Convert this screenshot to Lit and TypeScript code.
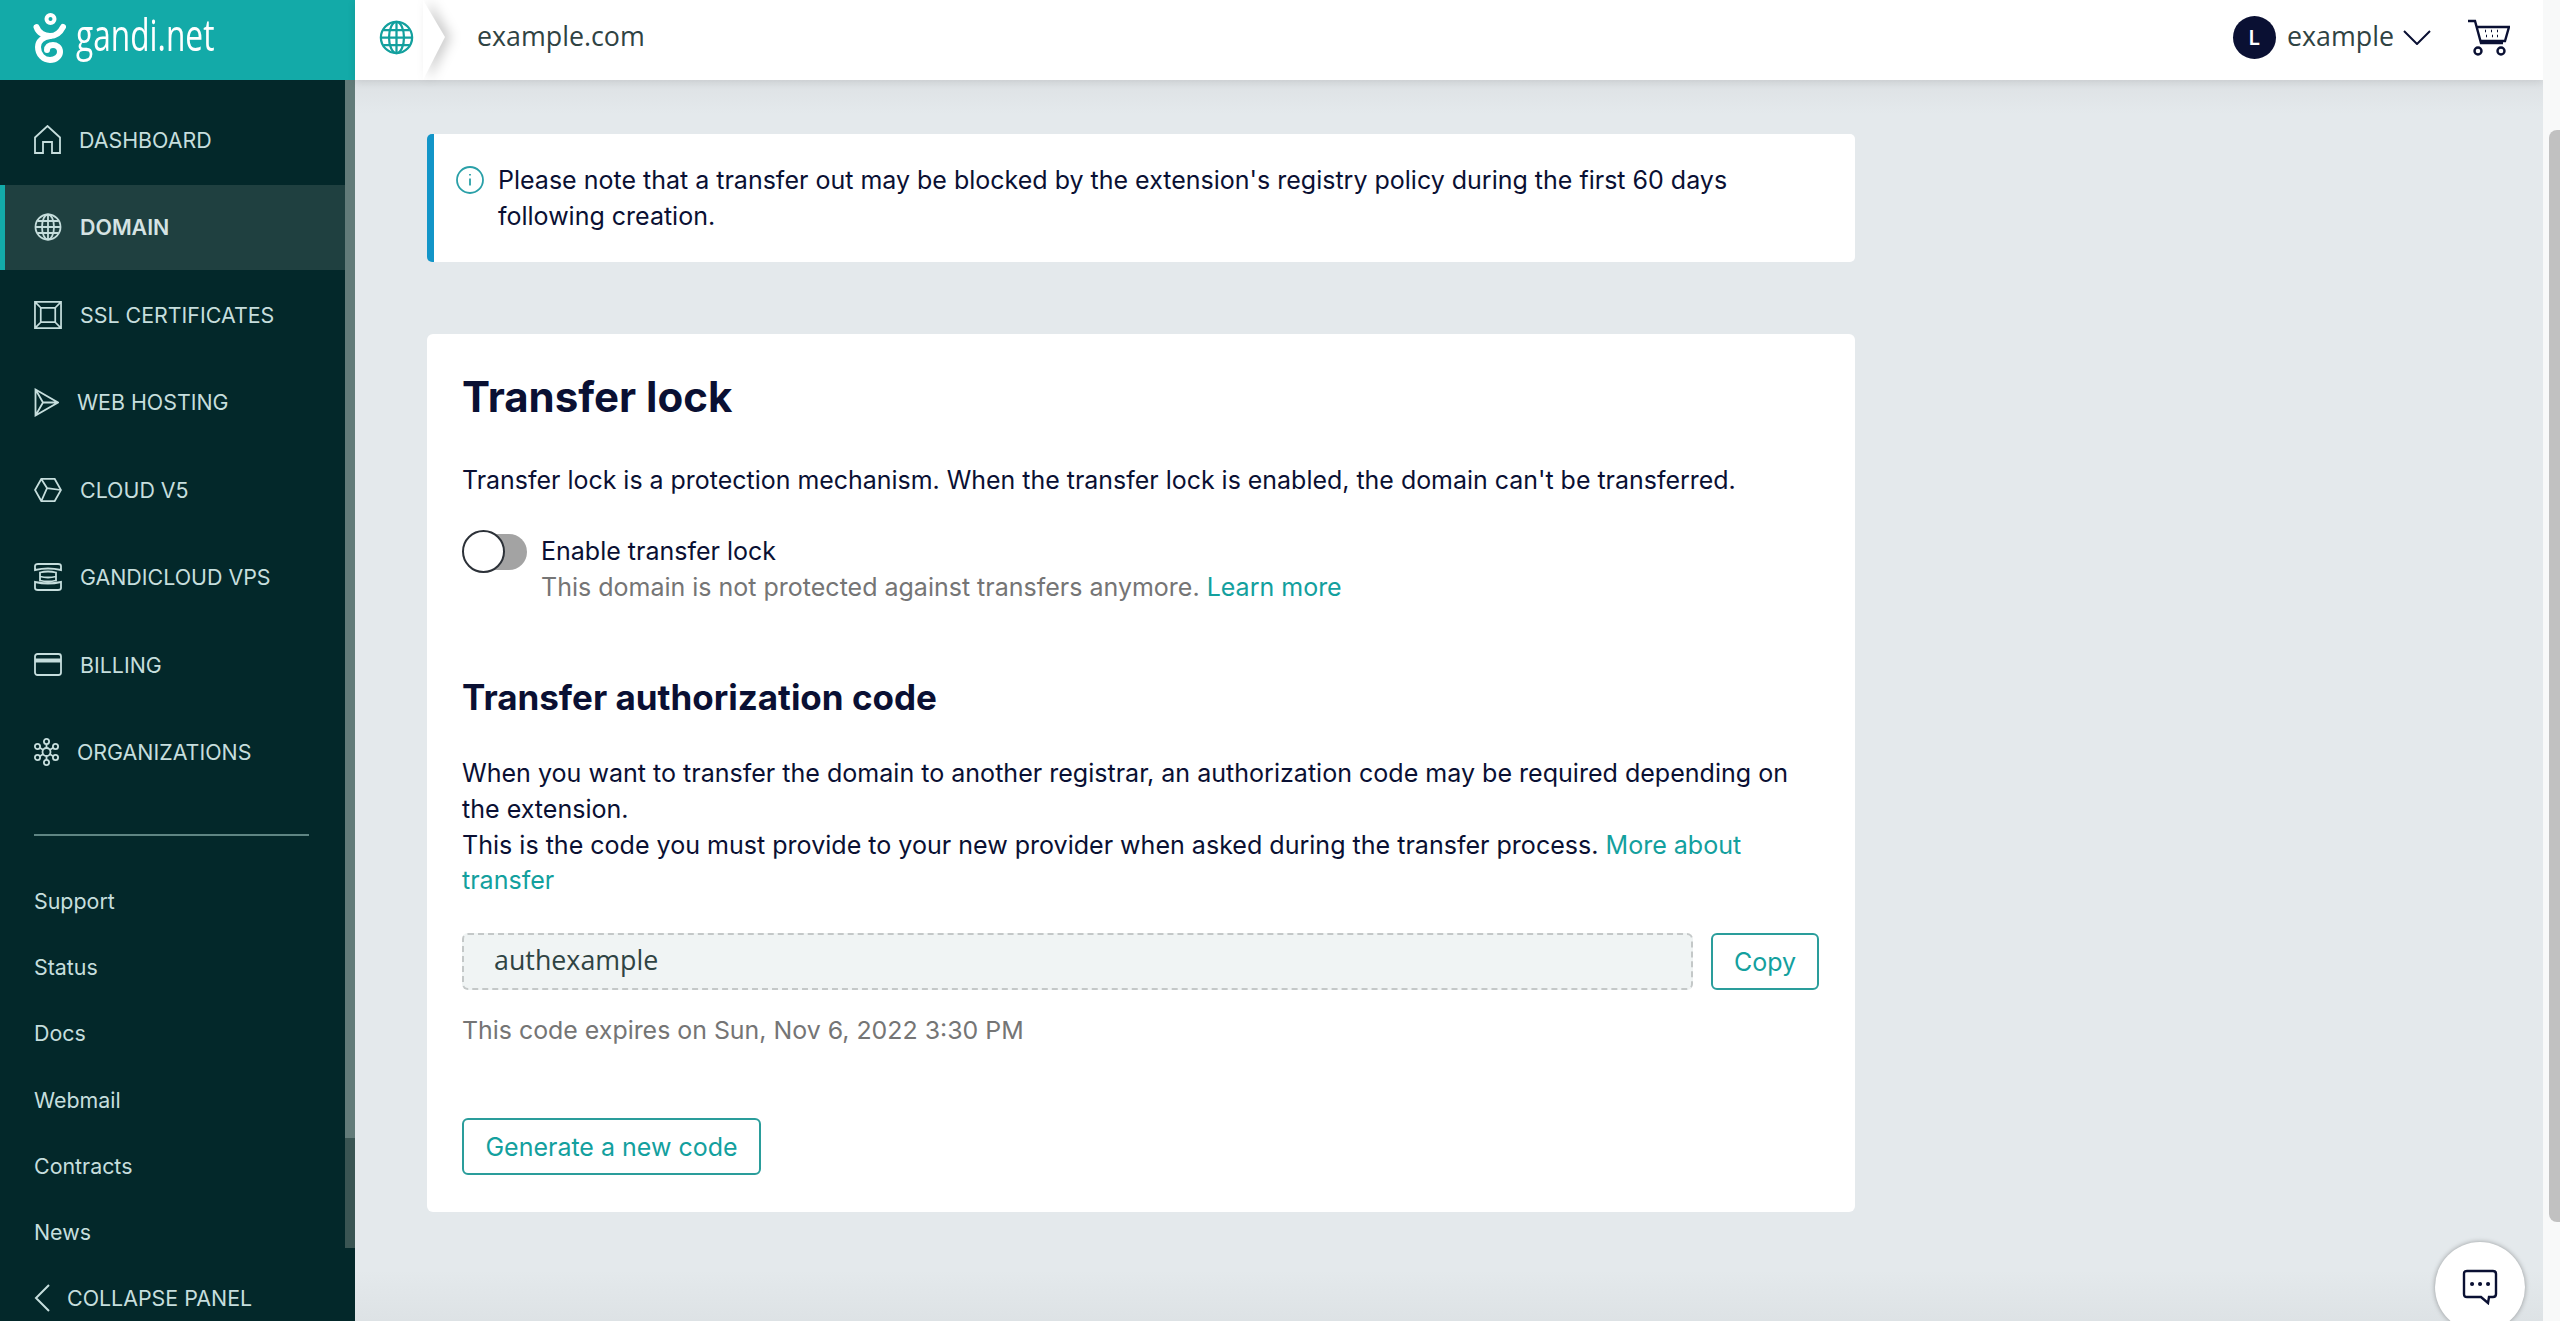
import { LitElement, html, css, svg } from "lit";
import { customElement } from "lit/decorators.js";

const globe = svg`<circle cx="14" cy="14" r="12.5"/><ellipse cx="14" cy="14" rx="6" ry="12.5"/><path d="M14 1.5v25M1.5 14h25M3.5 8h21M3.5 20h21"/>`;
const navItems = [
  { label: "DASHBOARD", w: 27, h: 29, vb: "0 0 27 29", icon: svg`<path d="M1 12.5 13.5 1 26 12.5V28H18V17H9V28H1Z"/>` },
  { label: "DOMAIN", w: 28, h: 28, vb: "0 0 28 28", active: true, icon: globe },
  { label: "SSL CERTIFICATES", w: 28, h: 28, vb: "0 0 29 29", icon: svg`<path d="M1 1h27v27H1ZM7 7h15v15H7ZM1 1l6 6M28 1l-6 6M1 28l6-6M28 28l-6-6"/>` },
  { label: "WEB HOSTING", w: 25, h: 29, vb: "0 0 25 29", icon: svg`<path d="M1.5 1.5 24 14.5 1.5 27.500ZM1.500 1.500 9 14.500 1.500 27.500M9 14.500H24"/>` },
  { label: "CLOUD V5", w: 28, h: 24, vb: "0 0 29 25", icon: svg`<path d="M1 12.500 7.500 1h14L28 12.500 21.500 24h-14ZM7.500 1l6 9.500L28 12.500M13.500 10.500 7.500 24"/>` },
  { label: "GANDICLOUD VPS", w: 28, h: 28, vb: "0 0 28 28", icon: svg`<path d="M1 3q0-2 3-2h20q3 0 3 2v4q-13-3-26 0ZM1 25q0 2 3 2h20q3 0 3-2v-6q-13 3-26 0ZM6 9.500q8-2 16 0v8q-8 2-16 0ZM6 13.500q8 2 16 0"/>` },
  { label: "BILLING", w: 28, h: 23, vb: "0 0 28 23", icon: svg`<rect x="1" y="1" width="26" height="21" rx="2.500"/><path d="M1 7.500h26" stroke-width="4"/>` },
  { label: "ORGANIZATIONS", w: 25, h: 28, vb: "0 0 25 28", icon: svg`<circle cx="12.500" cy="14" r="4"/><circle cx="12.500" cy="3.500" r="2.600"/><circle cx="12.500" cy="24.500" r="2.600"/><circle cx="3.500" cy="8.500" r="2.600"/><circle cx="21.500" cy="8.500" r="2.600"/><circle cx="3.500" cy="19.500" r="2.600"/><circle cx="21.500" cy="19.500" r="2.600"/><path d="M12.500 6v4M12.500 18v4M5.800 9.800l3.200 2M19.200 9.800l-3.200 2M5.800 18.200l3.200-2M19.200 18.200l-3.200-2"/>` },
];
const links = ["Support", "Status", "Docs", "Webmail", "Contracts", "News"];

@customElement("app-root")
export class AppRoot extends LitElement {
  static styles = css`
    :host { display: block; width: 2560px; height: 1321px; overflow: hidden; position: relative; font-family: Inter, "Liberation Sans", sans-serif; background: #e4e9ec; color: #0a1033; }
    * { box-sizing: border-box; }
    .layout { display: flex; width: 100%; height: 100%; }
    .side { width: 355px; height: 100%; flex: none; display: flex; flex-direction: column; background: #03282a; position: relative; }
    .logo { height: 80px; background: #13aaa8; display: flex; align-items: center; padding-left: 33px; gap: 10px; flex: none; }
    .logo svg { flex: none; margin-top: -5px; }
    .logo-text { color: #fff; font-family: "Open Sans", sans-serif; font-size: 44px; line-height: 60px; display: inline-block; transform: scaleX(.72); transform-origin: left center; letter-spacing: 0; margin-top: -12px; }
    nav { padding-top: 17px; width: 345px; }
    .item { height: 85px; margin-bottom: 2.500px; display: flex; align-items: center; padding-left: 34px; gap: 18px; color: #c6dedd; font-size: 21.400px; }
    .item svg { fill: none; stroke: #c6dedd; stroke-width: 1.800; flex: none; }
    .item.active { background: #1f4040; box-shadow: inset 5px 0 0 #13aaa8; font-weight: 600; color: #d5e3e3; }
    .divider { margin: 37px 0 0 34px; width: 275px; height: 2px; background: #5f8583; flex: none; }
    .links { padding: 32px 0 0 34px; display: flex; flex-direction: column; }
    .links a { height: 66.200px; line-height: 66.200px; color: #c6dedd; font-size: 21.400px; }
    .track { position: absolute; left: 345px; top: 80px; width: 10px; height: 1058px; background: #627b79; }
    .thumb { position: absolute; left: 345px; top: 1138px; width: 10px; height: 110px; background: #3a5553; }
    .collapse { position: absolute; left: 0; bottom: 0; width: 355px; height: 46px; padding-left: 34px; display: flex; align-items: center; gap: 17px; color: #c6dedd; font-size: 21.400px; background: #03282a; }
    .collapse svg { fill: none; stroke: #c6dedd; stroke-width: 2; flex: none; }
    .right { flex: 1; display: flex; flex-direction: column; min-width: 0; }
    header { height: 80px; flex: none; background: #fff; display: flex; align-items: center; box-shadow: 0 2px 8px rgba(0,0,0,.1); position: relative; }
    .crumb-globe { margin: -5px 0 0 24px; fill: none; stroke: #13a09e; stroke-width: 1.800; flex: none; }
    .chev { position: absolute; left: 68px; top: 0; filter: drop-shadow(6px 0 6px rgba(0,0,0,.2)); }
    .domain { margin: -10px 0 0 63px; font-family: "Open Sans", sans-serif; font-size: 26.800px; color: #2f4343; position: relative; }
    .spacer { flex: 1; }
    .avatar { width: 43px; height: 43px; border-radius: 50%; background: #0a1033; color: #fff; font-size: 20px; font-weight: 600; display: flex; align-items: center; justify-content: center; flex: none; margin-top: -5px; }
    .user { margin: -10px 0 0 11px; font-family: "Open Sans", sans-serif; font-size: 26.800px; color: #2f4343; }
    .down { margin: -5px 0 0 9px; fill: none; stroke: #0a1033; stroke-width: 2; flex: none; }
    .cart { margin: -5px 33px 0 36px; flex: none; fill: none; stroke: #0a1033; stroke-width: 2.400; }
    main { flex: 1; padding: 54px 0 0 72px; min-height: 0; background: linear-gradient(#dde1e4, #e4e9ec 34px, #e4e9ec 1190px, #dde2e5); }
    .alert { width: 1428px; height: 128px; background: #fff; border-radius: 5px; border-left: 7px solid #1295c8; padding: 28px 70px 0 22px; display: flex; gap: 14px; font-size: 25px; line-height: 36px; margin-bottom: 72px; }
    .alert svg { flex: none; margin-top: 4px; fill: none; stroke: #2aa0a8; stroke-width: 1.800; }
    .card { width: 1428px; height: 878px; background: #fff; border-radius: 6px; padding: 36px 35px; }
    h1 { margin: 0; font-size: 42px; line-height: 54px; font-weight: 700; }
    h2 { margin: 70px 0 0; font-size: 35px; line-height: 44px; font-weight: 700; }
    p { margin: 0; font-size: 24.950px; line-height: 35.840px; color: #0a1033; }
    .p1 { margin-top: 39px; }
    .switch-row { display: flex; margin-top: 34px; gap: 14px; }
    .switch { width: 65px; height: 43px; position: relative; flex: none; margin-top: -3px; }
    .switch .bar { position: absolute; left: 10px; right: 0; top: 4px; height: 36px; border-radius: 18px; background: #a3a3a3; }
    .switch .knob { position: absolute; left: 0; top: 0; width: 43px; height: 43px; border-radius: 50%; background: #fff; border: 2px solid #2c3138; }
    .label { font-size: 25px; line-height: 36px; }
    .sub { font-size: 25px; line-height: 36px; color: #757575; }
    a.l { color: #13a09e; text-decoration: none; }
    .p2 { margin-top: 37px; font-size: 25.050px; }
    .code-row { display: flex; gap: 18px; margin-top: 34px; width: 1357px; }
    .code { flex: 0 0 1231px; height: 57px; background: #f0f4f4; border: 2px dashed #c4c8c8; border-radius: 6px; padding-left: 30px; font-size: 26.800px; line-height: 50px; color: #2f4343; font-family: "Open Sans", Inter, sans-serif; }
    .btn { display: inline-flex; align-items: center; justify-content: center; height: 57px; border: 2px solid #2a9d9b; border-radius: 6px; background: #fff; color: #13a09e; font-size: 25px; font-family: Inter, sans-serif; }
    .copy { width: 108px; }
    .expires { margin-top: 22px; color: #757575; font-size: 24.900px; line-height: 36px; }
    .gen { width: 299px; margin-top: 70px; }
    .scroll { width: 17px; flex: none; background: #f8f9f9; position: relative; }
    .scroll div { position: absolute; left: 6px; right: 0; top: 130px; height: 1092px; background: #c1c1c1; border-radius: 8px 0 0 8px; }
    .chat { position: absolute; left: 2435px; top: 1242px; width: 90px; height: 90px; border-radius: 50%; background: #fff; box-shadow: 0 0 5px rgba(0,0,0,.35); display: flex; align-items: center; justify-content: center; }
    .chat svg { fill: none; stroke: #0a1033; stroke-width: 2.400; margin-top: 0; }
  `;

  render() {
    return html`
      <div class="layout">
        <aside class="side">
          <div class="logo">
            <svg width="33" height="50" viewBox="0 0 33 50" fill="none" stroke="#fff" stroke-linecap="round">
              <circle cx="17.500" cy="6" r="4" stroke-width="4"/>
              <path d="M3.500 14c2 6 8 9 13.500 9s10-3 13-9" stroke-width="6"/>
              <path d="M17 23c-7 1-12 5-12 11 0 8 6 13 12 13s10-4 10-8c0-5-4-7-7-7-4 0-6 2-6 5" stroke-width="6"/>
            </svg>
            <span class="logo-text">gandi.net</span>
          </div>
          <nav>
            ${navItems.map((n) => html`
              <div class="item ${n.active ? "active" : ""}">
                <svg width="${n.w}" height="${n.h}" viewBox="${n.vb}">${n.icon}</svg>
                <span>${n.label}</span>
              </div>`)}
          </nav>
          <div class="divider"></div>
          <div class="links">${links.map((l) => html`<a>${l}</a>`)}</div>
          <div class="track"></div>
          <div class="thumb"></div>
          <div class="collapse">
            <svg width="16" height="28" viewBox="0 0 16 28"><path d="M15 1 2 14l13 13"/></svg>
            <span>COLLAPSE PANEL</span>
          </div>
        </aside>
        <div class="right">
          <header>
            <svg class="crumb-globe" width="35" height="35" viewBox="0 0 28 28">${globe}</svg>
            <svg class="chev" width="30" height="80" viewBox="0 0 30 80"><path d="M0 0 22 37 0 80H-10V0Z" fill="#fff"/></svg>
            <span class="domain">example.com</span>
            <span class="spacer"></span>
            <div class="avatar">L</div>
            <span class="user">example</span>
            <svg class="down" width="28" height="15" viewBox="0 0 28 15"><path d="M1 1l13 13L27 1"/></svg>
            <svg class="cart" width="43" height="37" viewBox="0 0 43 37">
              <path d="M1 2h7l6 22h22M10 8h32l-4 14H14"/><circle cx="11" cy="32" r="3.500"/><circle cx="34" cy="32" r="3.500"/>
              <path d="M18 12h1M24 12h1M30 12h1M19 17h1M25 17h1M30 17h1" stroke-width="2.500"/>
            </svg>
          </header>
          <main>
            <div class="alert">
              <svg width="28" height="28" viewBox="0 0 28 28"><circle cx="14" cy="14" r="13"/><path d="M14 12.500v7M14 8v1.500"/></svg>
              <span>Please note that a transfer out may be blocked by the extension's registry policy during the first 60 days following creation.</span>
            </div>
            <section class="card">
              <h1>Transfer lock</h1>
              <p class="p1">Transfer lock is a protection mechanism. When the transfer lock is enabled, the domain can't be transferred.</p>
              <div class="switch-row">
                <div class="switch"><div class="bar"></div><div class="knob"></div></div>
                <div>
                  <div class="label">Enable transfer lock</div>
                  <div class="sub">This domain is not protected against transfers anymore. <a class="l">Learn more</a></div>
                </div>
              </div>
              <h2>Transfer authorization code</h2>
              <p class="p2">When you want to transfer the domain to another registrar, an authorization code may be required depending on the extension.<br>This is the code you must provide to your new provider when asked during the transfer process. <a class="l">More about</a><br><a class="l">transfer</a></p>
              <div class="code-row"><div class="code">authexample</div><button class="btn copy">Copy</button></div>
              <div class="expires">This code expires on Sun, Nov 6, 2022 3:30 PM</div>
              <button class="btn gen">Generate a new code</button>
            </section>
          </main>
        </div>
        <div class="scroll"><div></div></div>
      </div>
      <div class="chat">
        <svg width="36" height="36" viewBox="0 0 36 36"><path d="M5 2h26q3 0 3 3v20q0 3-3 3h-4l-1 6-7-6H5q-3 0-3-3V5q0-3 3-3Z"/><path d="M10 15h.1M18 15h.1M26 15h.1" stroke-width="4" stroke-linecap="round"/></svg>
      </div>
    `;
  }
}
